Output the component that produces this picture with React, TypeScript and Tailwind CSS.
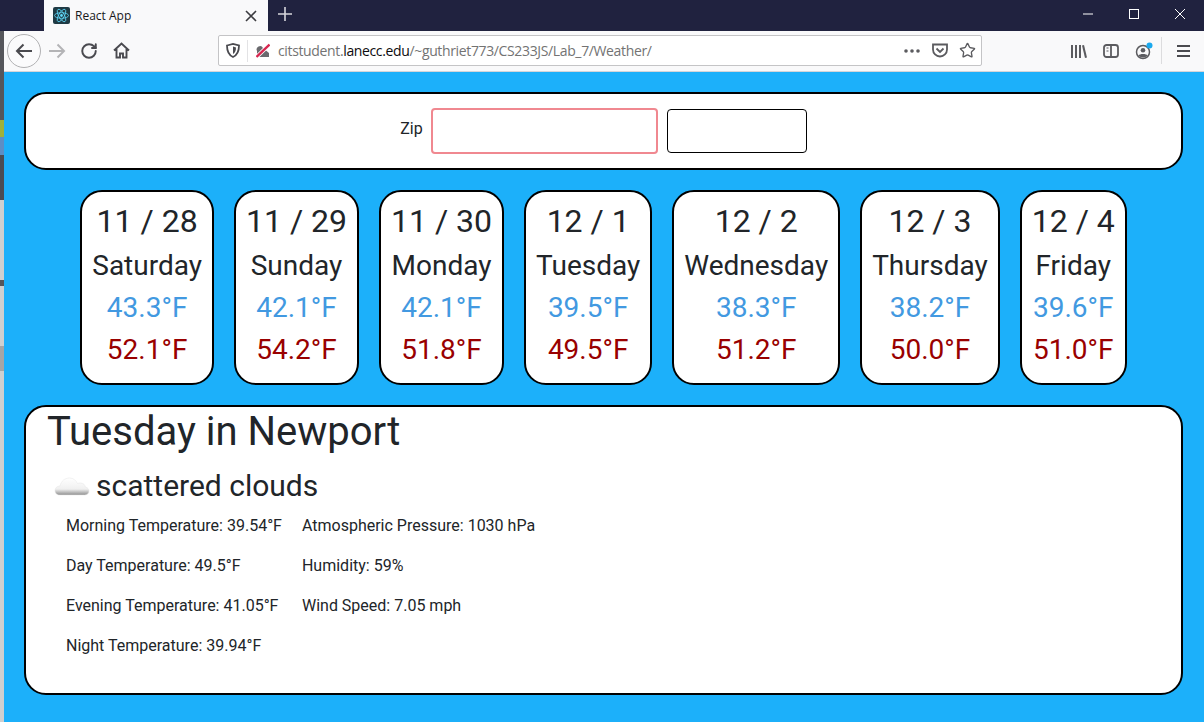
import { RotateCw, Star } from 'lucide-react'

const days = [
  { date: '11 / 28', name: 'Saturday', low: '43.3°F', high: '52.1°F' },
  { date: '11 / 29', name: 'Sunday', low: '42.1°F', high: '54.2°F' },
  { date: '11 / 30', name: 'Monday', low: '42.1°F', high: '51.8°F' },
  { date: '12 / 1', name: 'Tuesday', low: '39.5°F', high: '49.5°F' },
  { date: '12 / 2', name: 'Wednesday', low: '38.3°F', high: '51.2°F' },
  { date: '12 / 3', name: 'Thursday', low: '38.2°F', high: '50.0°F' },
  { date: '12 / 4', name: 'Friday', low: '39.6°F', high: '51.0°F' },
]

const leftDetails = [
  'Morning Temperature: 39.54°F',
  'Day Temperature: 49.5°F',
  'Evening Temperature: 41.05°F',
  'Night Temperature: 39.94°F',
]

const rightDetails = ['Atmospheric Pressure: 1030 hPa', 'Humidity: 59%', 'Wind Speed: 7.05 mph']

function ReactIcon() {
  return (
    <svg width="17" height="17" viewBox="0 0 17 17" className="ml-[9px] shrink-0">
      <rect width="17" height="17" rx="2" fill="#1f3a44" />
      <g fill="none" stroke="#61dafb" strokeWidth="0.8">
        <ellipse cx="8.5" cy="8.5" rx="7" ry="2.8" />
        <ellipse cx="8.5" cy="8.5" rx="7" ry="2.8" transform="rotate(60 8.5 8.5)" />
        <ellipse cx="8.5" cy="8.5" rx="7" ry="2.8" transform="rotate(120 8.5 8.5)" />
      </g>
      <circle cx="8.5" cy="8.5" r="1.4" fill="#61dafb" />
    </svg>
  )
}

function TitleBar() {
  return (
    <div className="flex h-[31px] bg-[#20223f]">
      <div className="w-[44px] shrink-0" />
      <div className="flex w-[224px] shrink-0 items-center bg-[#f9f9fa]">
        <ReactIcon />
        <span className="ml-[5px] text-[12px] text-[#18181a] font-['Open_Sans',sans-serif]">React App</span>
        <svg width="12" height="12" viewBox="0 0 12 12" className="ml-auto mr-[11px]" stroke="#3c3c40" strokeWidth="1.6">
          <path d="M1 1l10 10M11 1L1 11" />
        </svg>
      </div>
      <svg width="14" height="14" viewBox="0 0 14 14" className="ml-[10px] mt-[7px]" stroke="#d6d6dc" strokeWidth="1.6">
        <path d="M7 0v14M0 7h14" />
      </svg>
      <div className="ml-auto flex">
        <svg width="12" height="12" viewBox="0 0 12 12" className="mr-[34px] mt-[8px]" stroke="#fff">
          <path d="M1 6h10" />
        </svg>
        <svg width="12" height="12" viewBox="0 0 12 12" className="mr-[34px] mt-[8px]" stroke="#fff" fill="none">
          <rect x="1.5" y="1.5" width="9" height="9" />
        </svg>
        <svg width="12" height="12" viewBox="0 0 12 12" className="mr-[18px] mt-[8px]" stroke="#fff">
          <path d="M1 1l10 10M11 1L1 11" />
        </svg>
      </div>
    </div>
  )
}

function DesktopStrip() {
  return (
    <div className="flex w-[4px] shrink-0 flex-col">
      <div className="h-[89px] bg-[#55565b]" />
      <div className="h-[17px] bg-[#9fb13a]" />
      <div className="h-[18px] bg-[#5d8ec4]" />
      <div className="h-[45px] bg-[#4c4c52]" />
      <div className="h-[80px] bg-[#cfcfcf]" />
      <div className="h-[6px] bg-[#55555a]" />
      <div className="h-[60px] bg-[#cfcfcf]" />
      <div className="h-[25px] bg-[#a5a5a5]" />
      <div className="flex-1 bg-[#cfcfcf]" />
    </div>
  )
}

function Toolbar() {
  return (
    <div className="flex h-[41px] items-center border-b border-[#d5d5d9] bg-[#f9f9fa] pb-[1px]">
      <div className="ml-[3px] flex h-[34px] w-[34px] items-center justify-center rounded-full border border-[#b1b1b3] bg-[#fbfbfc]">
        <svg width="18" height="16" viewBox="0 0 18 16" fill="none" stroke="#4a4a4f" strokeWidth="2">
          <path d="M17 8H2M8.500 1.500L2 8l6.500 6.500" />
        </svg>
      </div>
      <svg width="18" height="16" viewBox="0 0 18 16" className="ml-[7px]" fill="none" stroke="#b4b4b6" strokeWidth="2">
        <path d="M1 8h15M9.500 1.500L16 8l-6.500 6.500" />
      </svg>
      <RotateCw size={18} strokeWidth={2.6} color="#4a4a4f" className="ml-[14px]" />
      <svg width="17" height="17" viewBox="0 0 17 17" className="ml-[15px]" fill="none" stroke="#4a4a4f" strokeWidth="1.9">
        <path d="M1 8.500L8.500 1.500 16 8.500M3.500 7v8.500h3.500v-4h3v4h3.500V7" />
      </svg>
      <div className="ml-[88px] flex h-[31px] w-[764px] items-center rounded-[2px] border border-[#c4c4c6] bg-white">
        <svg width="14" height="15" viewBox="0 0 14 15" className="ml-[7px]" fill="none" stroke="#4a4a4f" strokeWidth="1.8">
          <path d="M1 2.500L7 1l6 1.500c0 6-1.500 9.500-6 11.500C2.500 12 1 8.500 1 2.500z" />
          <path d="M7 3.500v7.500c2-1 3-3.500 3-6.500z" fill="#4a4a4f" stroke="none" />
        </svg>
        <div className="ml-[7px] h-[22px] w-px bg-[#e3e3e5]" />
        <svg width="14" height="15" viewBox="0 0 14 15" className="ml-[8px]">
          <path d="M1 14V8a3 3 0 0 1 6-3l6 5v4z" fill="#6a6a6e" />
          <path d="M0.500 14L13.500 1.500" stroke="#fff" strokeWidth="4" />
          <path d="M0.500 14L13.500 1.500" stroke="#d7264f" strokeWidth="2.400" />
        </svg>
        <span className="ml-[8px] text-[14px] leading-none text-[#737373] font-['Open_Sans',sans-serif] tracking-[-0.36px]">
          citstudent.<span className="text-[#0c0c0d]">lanecc.edu</span>/~guthriet773/CS233JS/Lab_7/Weather/
        </span>
        <div className="ml-auto flex items-center">
          <svg width="16" height="4" viewBox="0 0 16 4" fill="#5b5b5f">
            <circle cx="2" cy="2" r="1.800" />
            <circle cx="8" cy="2" r="1.800" />
            <circle cx="14" cy="2" r="1.800" />
          </svg>
          <svg width="16" height="15" viewBox="0 0 16 15" className="ml-[12px]" fill="none" stroke="#5b5b5f" strokeWidth="1.800">
            <path d="M1 1.500h14v5a7 7 0 0 1-14 0z" />
            <path d="M4.500 5.500L8 9l3.500-3.500" />
          </svg>
          <Star size={17} strokeWidth={1.9} color="#5b5b5f" className="ml-[11px] mr-[5px]" />
        </div>
      </div>
      <svg width="16" height="14" viewBox="0 0 16 14" className="ml-[89px]" fill="#5b5b5f">
        <rect x="0" y="1" width="2" height="13" />
        <rect x="4" y="1" width="2" height="13" />
        <rect x="8" y="1" width="2" height="13" />
        <path d="M11 1.500l2-.5 3 12.500-2 .5z" />
      </svg>
      <svg width="16" height="14" viewBox="0 0 16 14" className="ml-[16px]" fill="none" stroke="#5b5b5f" strokeWidth="1.800">
        <rect x="1" y="1" width="14" height="12" rx="2.500" />
        <path d="M8 1v12" />
        <path d="M3.500 4h2M3.500 7h2" strokeWidth="1.200" />
      </svg>
      <svg width="20" height="18" viewBox="0 0 20 18" className="ml-[15px]" fill="none">
        <circle cx="9" cy="10" r="6.500" stroke="#5b5b5f" strokeWidth="1.500" />
        <circle cx="9" cy="8.200" r="2.300" fill="#5b5b5f" />
        <path d="M4.500 13.500c1-2 8-2 9 0-2 2.500-7 2.500-9 0z" fill="#5b5b5f" />
        <circle cx="15.500" cy="3.500" r="3" fill="#1aa9ee" />
      </svg>
      <div className="ml-[7px] h-[27px] w-px bg-[#dcdcde]" />
      <svg width="13" height="12" viewBox="0 0 13 12" className="ml-[15px]" fill="#4a4a4f">
        <rect y="0" width="13" height="2" />
        <rect y="5" width="13" height="2" />
        <rect y="10" width="13" height="2" />
      </svg>
    </div>
  )
}

function DayCard({ day }: { day: (typeof days)[0] }) {
  return (
    <div className="rounded-[22px] border-2 border-black bg-white px-[10px] pb-[16px] pt-[10px] text-center">
      <div className="text-[32px] leading-[38px] mb-[9px] text-[#212529]">{day.date}</div>
      <div className="text-[28px] leading-[34px] mb-[8px] text-[#212529]">{day.name}</div>
      <div className="text-[28px] leading-[34px] mb-[8px] text-[#4299e1]">{day.low}</div>
      <div className="text-[28px] leading-[34px] text-[#990000]">{day.high}</div>
    </div>
  )
}

function Cloud() {
  return (
    <svg width="36" height="24" viewBox="0 0 36 24" className="shrink-0">
      <defs>
        <linearGradient id="cloud" x1="0" y1="0" x2="0" y2="1">
          <stop offset="0" stopColor="#ffffff" />
          <stop offset="0.65" stopColor="#f0f0f0" />
          <stop offset="1" stopColor="#8f8f8f" />
        </linearGradient>
      </defs>
      <path
        d="M6 21C2 21 1 18.500 1 16.500 1 14 3 12 6 12c1-5 5-8 9.500-8 4 0 6.500 2.500 8 5.500 1-.5 2-.5 3-.5 3 0 4.500 2 5 4 2 .5 3.500 2 3.500 4 0 2.500-2 4-4.500 4z"
        fill="url(#cloud)"
        stroke="#e4e4e4"
        strokeWidth="0.500"
      />
    </svg>
  )
}

export default function App() {
  return (
    <div className="h-[722px] w-[1204px] overflow-hidden font-['Roboto',sans-serif]">
      <TitleBar />
      <div className="flex h-[691px]">
        <DesktopStrip />
        <div className="min-w-0 flex-1">
          <Toolbar />
          <div className="h-[650px] bg-[#1cb0fa] pl-[20px] pr-[21px] pt-[20px]">
            <div className="flex h-[78px] items-center justify-center rounded-[22px] border-2 border-black bg-white">
              <span className="text-[16px] text-[#212529] mr-[8px] -mt-[4px]">Zip</span>
              <div className="h-[46px] w-[227px] rounded-[4px] border-2 border-[#f08890] bg-white" />
              <div className="ml-[9px] h-[44px] w-[140px] rounded-[4px] border border-black bg-white" />
            </div>
            <div className="mt-[20px] flex justify-center gap-[20px]">
              {days.map((day) => (
                <DayCard key={day.date} day={day} />
              ))}
            </div>
            <div className="mt-[20px] h-[290px] rounded-[22px] border-2 border-black bg-white pl-[21px] pt-[1px] text-[#212529]">
              <h1 className="text-[40px] leading-[48px]">Tuesday in Newport</h1>
              <div className="mt-[11px] ml-[7px] flex items-center gap-[7px]">
                <Cloud />
                <h2 className="text-[30px] leading-[38px] -ml-[1px]">scattered clouds</h2>
              </div>
              <div className="mt-[9px] ml-[19px] flex gap-[20px] text-[16px] leading-[24px]">
                <div className="flex flex-col gap-[16px]">
                  {leftDetails.map((line) => (
                    <p key={line}>{line}</p>
                  ))}
                </div>
                <div className="flex flex-col gap-[16px]">
                  {rightDetails.map((line) => (
                    <p key={line}>{line}</p>
                  ))}
                </div>
              </div>
            </div>
          </div>
        </div>
      </div>
    </div>
  )
}
